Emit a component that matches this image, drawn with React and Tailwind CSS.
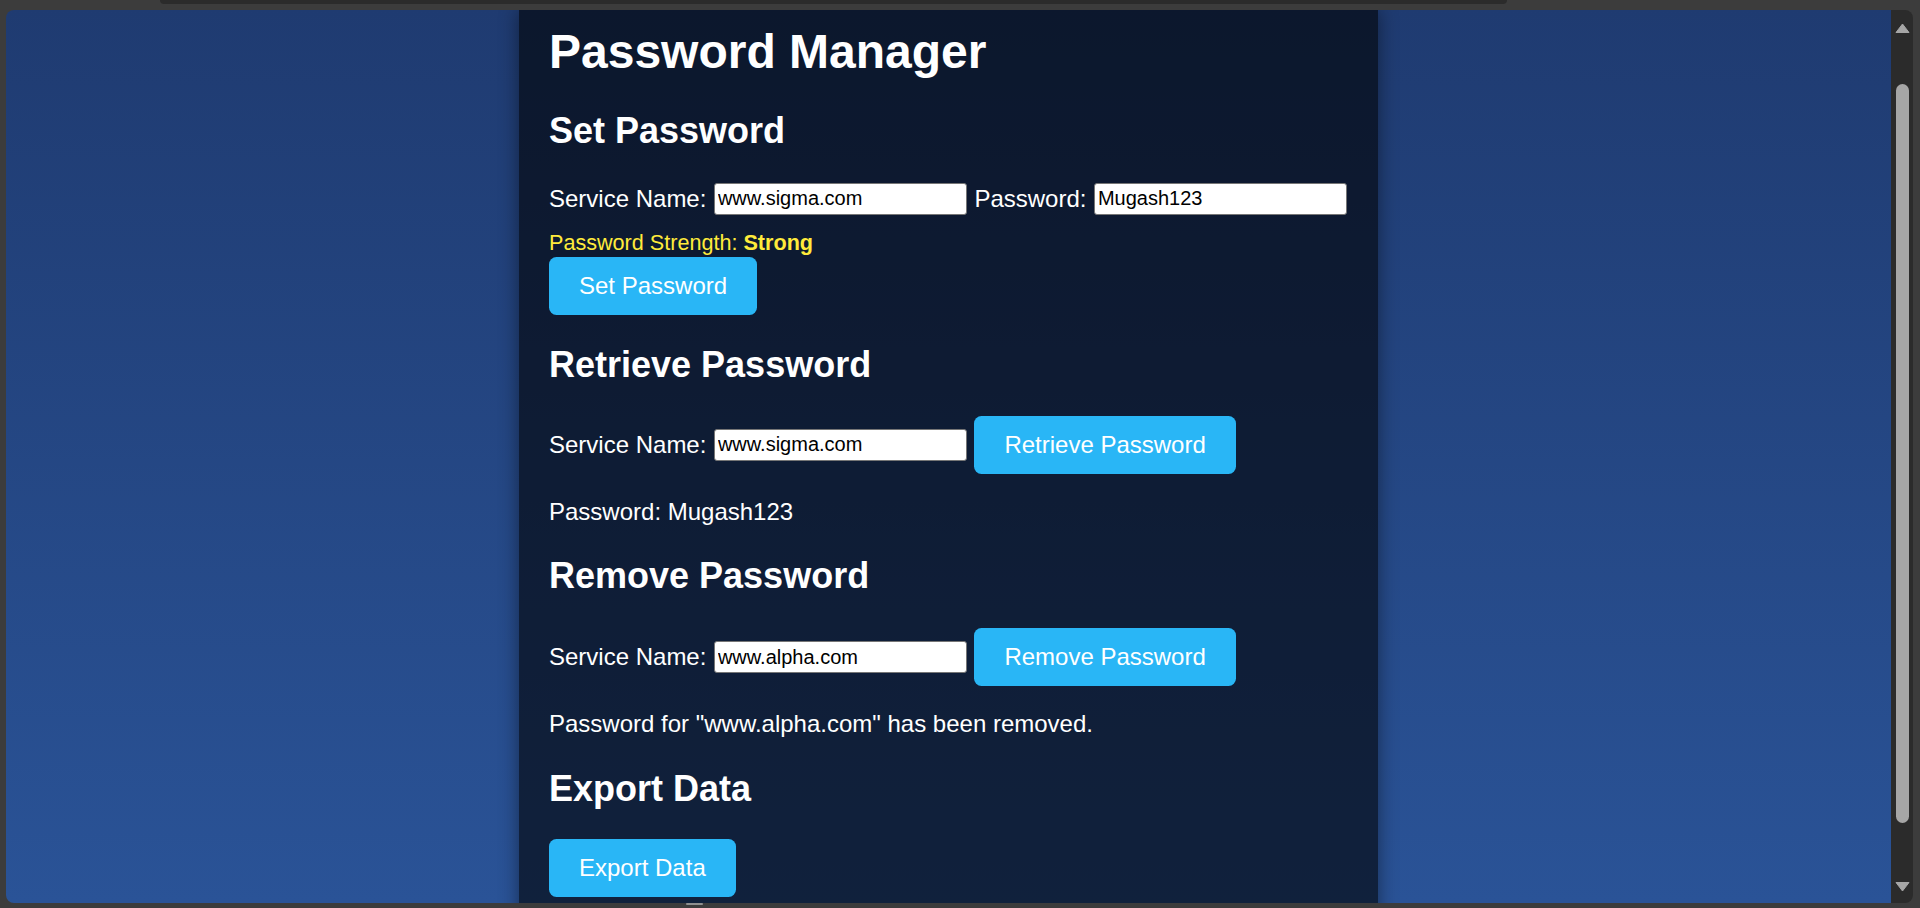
import { useState } from "react";

const Field = ({ value, onChange }) => (
  <input
    type="text"
    value={value}
    onChange={(e) => onChange(e.target.value)}
    className="w-[253px] h-[31.5px] shrink-0 bg-white text-black text-[20px] leading-[23px] px-[3px] py-[1.5px] border-[1.5px] border-[#767676] rounded-[3px] focus:outline-none"
  />
);

const Button = ({ children, onClick }) => (
  <button
    onClick={onClick}
    className="bg-[#29b6f6] text-white text-[24px] leading-[27.6px] py-[15px] px-[30px] rounded-[7.5px] cursor-pointer"
  >
    {children}
  </button>
);

const App = () => {
  const [service, setService] = useState("www.sigma.com"); // Set form
  const [password, setPassword] = useState("Mugash123");
  const [lookup, setLookup] = useState("www.sigma.com"); // Retrieve form
  const [removeName, setRemoveName] = useState("www.alpha.com"); // Remove form
  const [retrieved, setRetrieved] = useState("Mugash123");
  const [removed, setRemoved] = useState('Password for "www.alpha.com" has been removed.');

  return (
    <div className="w-[1920px] h-[908px] bg-[#3c3c3c] flex flex-col overflow-hidden font-['Liberation_Sans',Arial,sans-serif]">
      {/* Window chrome top */}
      <div className="h-[10px] shrink-0 flex">
        <div className="ml-[160px] w-[1347px] h-[4px] bg-[#2b2b2b] rounded-b-[6px]" />
      </div>

      {/* Viewport */}
      <div className="h-[893px] shrink-0 ml-[6px] mr-[7px] flex rounded-[8px] overflow-hidden">
        <main className="flex-1 overflow-hidden bg-linear-to-b from-[#1f3b71] to-[#2a5397]">
          <div className="w-[859px] mx-auto min-h-full bg-black/60 shadow-[0_0_18px_rgba(0,0,0,0.45)] px-[30px] pt-[14px] flex flex-col items-start text-white">
            <h1 className="text-[48px] leading-[55px] font-bold">Password Manager</h1>

            {/* Set Password */}
            <h2 className="mt-[31px] text-[36px] leading-[41px] font-bold">Set Password</h2>
            <div className="mt-[32px] flex items-center gap-[7.5px] text-[24px] leading-[27.6px]">
              <label>Service Name:</label>
              <Field value={service} onChange={setService} />
              <label>Password:</label>
              <Field value={password} onChange={setPassword} />
            </div>
            <p className="mt-[15.5px] text-[21.6px] leading-[25px] text-[#ffeb3b]">
              Password Strength: <strong className="font-bold">Strong</strong>
            </p>
            <div className="mt-[2px]">
              <Button>Set Password</Button>
            </div>

            {/* Retrieve Password */}
            <h2 className="mt-[29px] text-[36px] leading-[41px] font-bold">Retrieve Password</h2>
            <div className="mt-[31.5px] flex items-center gap-[7.5px] text-[24px] leading-[27.6px]">
              <label>Service Name:</label>
              <Field value={lookup} onChange={setLookup} />
              <Button onClick={() => setRetrieved(password)}>Retrieve Password</Button>
            </div>
            <p className="mt-[24px] text-[24px] leading-[27.6px]">Password: {retrieved}</p>

            {/* Remove Password */}
            <h2 className="mt-[30px] text-[36px] leading-[41px] font-bold">Remove Password</h2>
            <div className="mt-[32px] flex items-center gap-[7.5px] text-[24px] leading-[27.6px]">
              <label>Service Name:</label>
              <Field value={removeName} onChange={setRemoveName} />
              <Button onClick={() => setRemoved(`Password for "${removeName}" has been removed.`)}>
                Remove Password
              </Button>
            </div>
            <p className="mt-[24px] text-[24px] leading-[27.6px]">{removed}</p>

            {/* Export */}
            <h2 className="mt-[31px] text-[36px] leading-[41px] font-bold">Export Data</h2>
            <div className="mt-[29.5px] pb-[40px]">
              <Button>Export Data</Button>
            </div>
          </div>
        </main>

        {/* Scrollbar */}
        <div className="w-[22px] shrink-0 bg-[#2b2b2b] flex flex-col items-center pt-[13px]">
          <svg width="15" height="10" viewBox="0 0 15 10">
            <path d="M7.5 1 L14 9.5 L1 9.5 Z" fill="#a6a6a6" stroke="#a6a6a6" strokeLinejoin="round" />
          </svg>
          <div className="mt-[51px] w-[13px] h-[739px] bg-[#a6a6a6] rounded-full" />
          <svg className="mt-[59px]" width="15" height="10" viewBox="0 0 15 10">
            <path d="M1 0.5 L14 0.5 L7.5 9 Z" fill="#a6a6a6" stroke="#a6a6a6" strokeLinejoin="round" />
          </svg>
        </div>
      </div>

      {/* Window chrome bottom */}
      <div className="h-[5px] shrink-0">
        <div className="ml-[686px] w-[17px] h-[2px] bg-[#8f8f8f] rounded-full" />
      </div>
    </div>
  );
};

export default App;
